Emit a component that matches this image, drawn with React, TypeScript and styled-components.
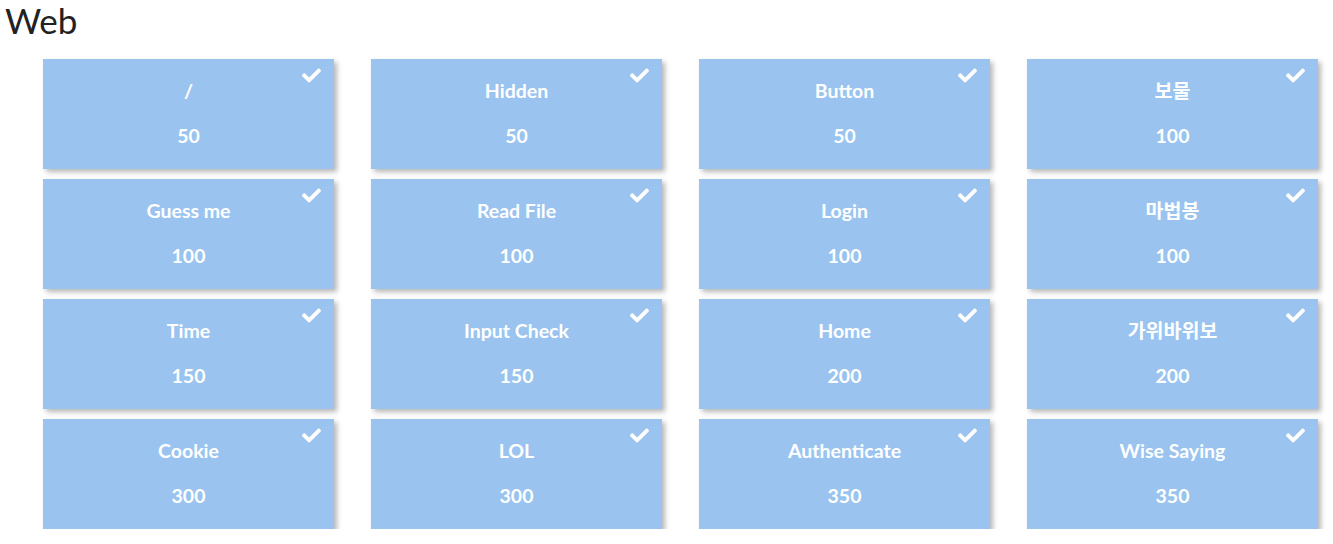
import React from 'react';
import styled, {createGlobalStyle} from 'styled-components';
import {FaCheck} from 'react-icons/fa';

const GlobalStyle = createGlobalStyle`
  html, body {
    margin: 0;
    padding: 0;
    background: #fff;
    font-family: Lato, "Noto Sans CJK KR", sans-serif;
  }
`;

const Page = styled.div`
  padding: 0 15px 0 5px;
`;

const Heading = styled.h1`
  margin: 0;
  font-size: 35px;
  font-weight: 400;
  line-height: 40px;
  color: #222;
`;

const Grid = styled.div`
  display: grid;
  grid-template-columns: repeat(4, 291px);
  column-gap: 37px;
  row-gap: 10px;
  margin: 19px 0 0 38px;
`;

const Card = styled.div<{ solved: boolean }>`
  position: relative;
  height: 110px;
  box-sizing: border-box;
  padding-top: 20px;
  background: ${props => props.solved ? '#9ac4ef' : '#b8b8b8'};
  box-shadow: 3px 3px 5px rgba(0, 0, 0, 0.28);
  display: flex;
  flex-direction: column;
  align-items: center;
  color: #fff;
  font-weight: 700;
  font-size: 19.5px;
  cursor: pointer;
`;

const Name = styled.div`
  line-height: 24px;
`;

const Points = styled.div`
  margin-top: 21px;
  line-height: 24px;
`;

const SolvedMark = styled(FaCheck)`
  position: absolute;
  top: 7px;
  right: 13px;
  width: 19px;
  height: 19px;
  color: #fff;
`;

const challenges = [
  {name: '/', value: 50},
  {name: 'Hidden', value: 50},
  {name: 'Button', value: 50},
  {name: '보물', value: 100},
  {name: 'Guess me', value: 100},
  {name: 'Read File', value: 100},
  {name: 'Login', value: 100},
  {name: '마법봉', value: 100},
  {name: 'Time', value: 150},
  {name: 'Input Check', value: 150},
  {name: 'Home', value: 200},
  {name: '가위바위보', value: 200},
  {name: 'Cookie', value: 300},
  {name: 'LOL', value: 300},
  {name: 'Authenticate', value: 350},
  {name: 'Wise Saying', value: 350},
];

export default function App() {
  return (
    <Page>
      <GlobalStyle/>
      <Heading>Web</Heading>
      <Grid>
        {challenges.map(c => (
          <Card key={c.name} solved>
            <SolvedMark/>
            <Name>{c.name}</Name>
            <Points>{c.value}</Points>
          </Card>
        ))}
      </Grid>
    </Page>
  );
}
